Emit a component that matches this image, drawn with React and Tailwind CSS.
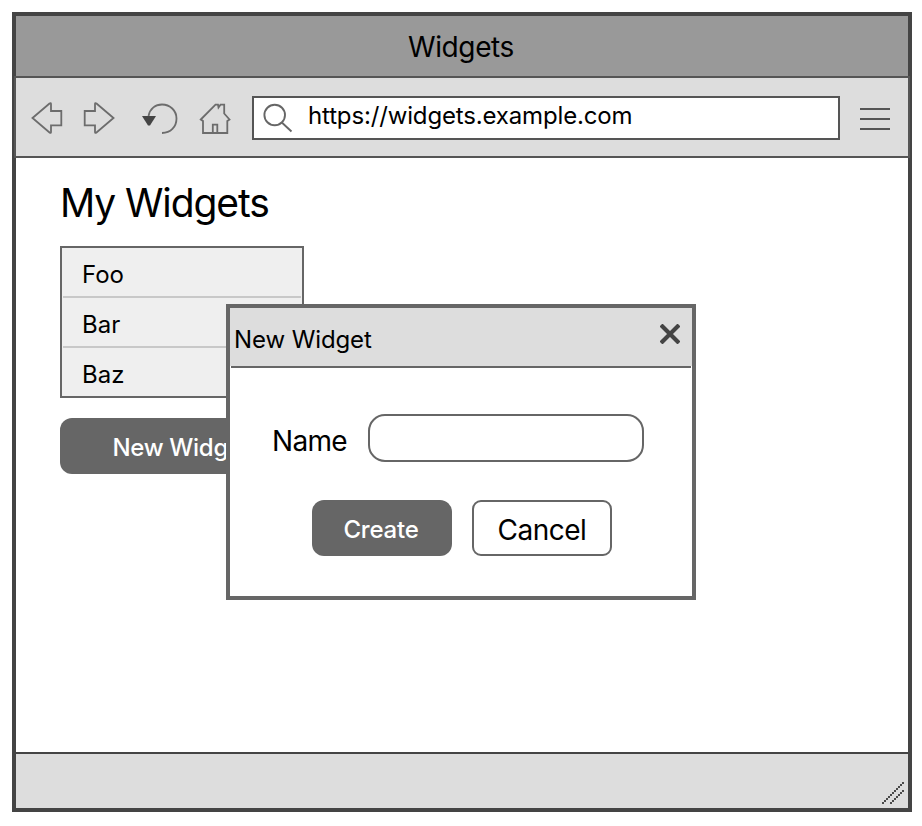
const items = ["Foo", "Bar", "Baz"];

function NavIcons() {
  return (
    <svg
      className="h-9 w-[204px] shrink-0"
      viewBox="30 100 204 36"
      fill="none"
      stroke="#6c6c6c"
      strokeWidth="1.8"
    >
      <path d="M32.5 118 49.5 103.5Q51 102.500 51 104V111H61.3V125.300H51V132Q51 133.500 49.500 132.500Z" />
      <path d="M113.500 118 96.500 103.500Q95 102.500 95 104V111H84.700V125.300H95V132Q95 133.500 96.500 132.500Z" />
      <path d="M148.500 116C150 108.500 155.500 104.500 162 104.500C170 104.500 176.500 110.500 176.500 118.500C176.500 127 170.500 133 162 133" />
      <path d="M142 116H156L150 125.500H148Z" fill="#444" stroke="none" />
      <path d="M200.800 119.500 215.500 104.700H218L218.500 107.500 220.500 104.700H224.200V113.500L229.500 119.500 227.300 121V133H203V121Z" />
      <path d="M212.800 133V124.700H217.300V133" />
    </svg>
  );
}

function SearchIcon() {
  return (
    <svg className="h-9 w-9 shrink-0" viewBox="260 100 36 36" fill="none" stroke="#666" strokeWidth="1.9">
      <circle cx="274.700" cy="115" r="10.300" />
      <path d="M281.800 122.500 291.500 131.500" />
    </svg>
  );
}

function ResizeGrip() {
  const cells = [
    ...Array.from({ length: 11 }, (_, i) => [i * 2, 20 - i * 2]),
    ...Array.from({ length: 7 }, (_, i) => [8 + i * 2, 20 - i * 2]),
  ];
  return (
    <svg className="size-[22px]" viewBox="0 0 22 22" fill="#4a4a4a">
      {cells.map(([x, y]) => (
        <rect key={`${x}-${y}`} x={x} y={y} width="2" height="2" />
      ))}
    </svg>
  );
}

function Dialog() {
  return (
    <div className="absolute left-[210px] top-[146px] flex h-[296px] w-[470px] flex-col border-4 border-[#666] bg-white">
      <div className="flex h-[58px] shrink-0 justify-between bg-[#ddd] pl-1 pr-3">
        <h2 className="mt-4 text-[24px] leading-8 tracking-[-0.1px]">New Widget</h2>
        <svg className="mt-4 size-5" viewBox="0 0 20 20" stroke="#444" strokeWidth="4.2">
          <path d="M1 1 19 19M19 1 1 19" />
        </svg>
      </div>
      <div className="mx-px h-0.5 shrink-0 bg-[#666]" />
      <div className="mt-[46px] flex h-12 pl-[42px]">
        <label className="w-24 pt-[9px] text-[28px] leading-9 tracking-[-0.7px]">Name</label>
        <div className="h-12 w-[276px] rounded-[17px] border-2 border-[#666] bg-white" />
      </div>
      <div className="mt-[38px] flex gap-5 pl-[82px]">
        <button className="h-14 w-[140px] rounded-xl bg-[#666] pr-0.5 pt-1 text-[24px] font-medium tracking-[-0.2px] text-white">Create</button>
        <button className="h-14 w-[140px] rounded-[9px] border-2 border-[#666] pt-1 text-[28px] tracking-[-0.5px]">Cancel</button>
      </div>
    </div>
  );
}

export default function App() {
  return (
    <div className="h-[826px] w-[922px] bg-white p-3 font-['Inter',sans-serif] text-black">
      <div className="flex h-[800px] w-[900px] flex-col border-4 border-[#444]">
        <header className="flex h-[60px] shrink-0 items-center justify-center bg-[#999] pr-0.5 pt-0.5 text-[28px] tracking-[-0.4px]">
          <span>Widgets</span>
        </header>
        <nav className="-mx-0.5 flex h-[82px] shrink-0 items-center border-2 border-[#555] bg-[#ddd] pl-3.5 pt-0.5">
          <NavIcons />
          <div className="ml-[18px] flex h-11 w-[588px] items-center border-2 border-[#555] bg-white pl-1.5">
            <SearchIcon />
            <span className="ml-3 -mt-1 text-[24px] tracking-[-0.15px]">https://widgets.example.com</span>
          </div>
          <div className="ml-5 mt-0.5 flex w-[30px] flex-col gap-2">
            <div className="h-0.5 bg-[#555]" />
            <div className="h-0.5 bg-[#555]" />
            <div className="h-0.5 bg-[#555]" />
          </div>
        </nav>
        <main className="relative h-[594px] shrink-0 pl-11">
          <h1 className="pt-[21px] text-[39px] leading-[48px] tracking-[-1.1px]">My Widgets</h1>
          <ul className="mt-[19px] h-[152px] w-[244px] border-2 border-[#666] bg-[#efefef] px-px">
            {items.map((item) => (
              <li key={item} className="h-[50px] border-b-2 border-[#c8c8c8] pl-[19px] pt-3 text-[24px] leading-[30px] last:border-b-0">
                {item}
              </li>
            ))}
          </ul>
          <button className="mt-5 h-14 w-[244px] rounded-xl bg-[#666] pr-0.5 pt-1 text-[24px] font-medium tracking-[-0.3px] text-white">New Widget</button>
          <Dialog />
        </main>
        <footer className="flex flex-1 items-end justify-end border-t-2 border-[#444] bg-[#ddd] pb-1 pr-1">
          <ResizeGrip />
        </footer>
      </div>
    </div>
  );
}
